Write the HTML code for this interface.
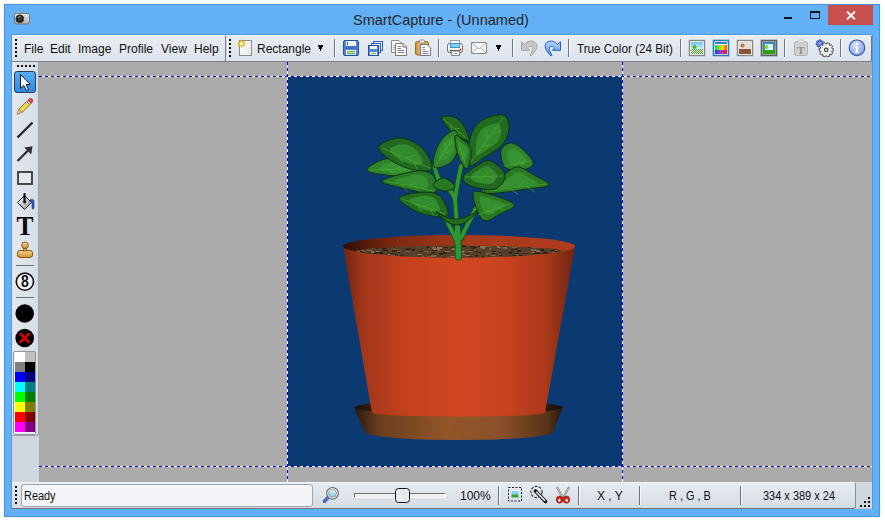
<!DOCTYPE html>
<html><head><meta charset="utf-8">
<style>
*{margin:0;padding:0;box-sizing:border-box}
html,body{width:885px;height:521px;overflow:hidden;background:#fff;font-family:"Liberation Sans",sans-serif}
.a{position:absolute}
#shadow{display:none}
#win{left:4px;top:4px;width:876px;height:513px;background:#62b0f6;border:1px solid #4b93d9;box-shadow:0 0 3px rgba(60,40,20,0.13)}
.title{left:353px;top:11px;font-size:15px;color:#262626;white-space:nowrap;transform:scaleX(0.968);transform-origin:0 0}
.tb{background:linear-gradient(#e9edf3,#dde3eb);border-bottom:1px solid #a9b2bd}
.menu{font-size:12px;color:#111;white-space:nowrap;top:42px}
.grip{width:2px;height:2px;background:#111}
.sep{width:1px;background:#6e757e;box-shadow:1px 0 0 #f6f8fb}
.txt{font-size:12px;color:#111;white-space:nowrap}
</style></head><body>
<div class="a" id="shadow"></div>
<div class="a" id="win"></div>
<!-- title bar icon -->
<svg class="a" style="left:13px;top:11px" width="18" height="15" viewBox="0 0 18 15">
 <defs><linearGradient id="camg" x1="0" y1="0" x2="0" y2="1"><stop offset="0" stop-color="#f4f4f4"/><stop offset="1" stop-color="#a8a8a8"/></linearGradient></defs>
 <rect x="3.5" y="0.8" width="3.5" height="2" rx="0.8" fill="#c8b8a0"/>
 <rect x="1.5" y="2.5" width="15" height="10.5" rx="1.8" fill="url(#camg)" stroke="#6a6a6a" stroke-width="0.9"/>
 <circle cx="6.8" cy="7.8" r="4" fill="#1a1a1a" stroke="#444" stroke-width="0.6"/>
 <circle cx="6.8" cy="7.8" r="2.2" fill="#3a3a3a"/>
 <path d="M5 6.8 A2 2 0 0 1 7.5 5.6" stroke="#bbb" stroke-width="0.8" fill="none"/>
 <rect x="12" y="4" width="3" height="2" fill="#fff" stroke="#999" stroke-width="0.4"/>
</svg>
<div class="a title">SmartCapture - (Unnamed)</div>
<!-- caption buttons -->
<div class="a" style="left:784px;top:17px;width:8px;height:2px;background:#111"></div>
<div class="a" style="left:810px;top:11px;width:10px;height:8px;border:1px solid #111;border-top-width:2px"></div>
<div class="a" style="left:828px;top:5px;width:45px;height:20px;background:#c7504f"></div>
<svg class="a" style="left:846px;top:11px" width="10" height="9" viewBox="0 0 10 9"><path d="M1 0.5 L9 8.5 M9 0.5 L1 8.5" stroke="#fff" stroke-width="1.8"/></svg>

<!-- client area -->
<div class="a" style="left:11px;top:34px;width:862px;height:475px;background:#4f9ae0"></div><div class="a" style="left:12px;top:35px;width:860px;height:474px;background:#cfd6e0"></div>

<!-- toolbars -->
<div class="a tb" style="left:12px;top:35px;width:214px;height:27px;border-right:1px solid #7d848c;border-radius:0 3px 3px 0;border-top:1px solid #f1f4f8"></div>
<div class="a tb" style="left:227px;top:35px;width:645px;height:27px;border-right:1px solid #6c737b;border-left:1px solid #f1f4f8;border-radius:2px 3px 3px 2px;border-top:1px solid #f1f4f8"></div>
<div class="a" style="left:12px;top:61px;width:860px;height:1px;background:#7b8189"></div>
<div class="a grip" style="left:15px;top:39px"></div><div class="a grip" style="left:15px;top:43px"></div><div class="a grip" style="left:15px;top:47px"></div><div class="a grip" style="left:15px;top:51px"></div><div class="a grip" style="left:15px;top:55px"></div><div class="a grip" style="left:229px;top:39px"></div><div class="a grip" style="left:229px;top:43px"></div><div class="a grip" style="left:229px;top:47px"></div><div class="a grip" style="left:229px;top:51px"></div><div class="a grip" style="left:229px;top:55px"></div>
<div class="a menu" style="left:24px">File</div>
<div class="a menu" style="left:50px">Edit</div>
<div class="a menu" style="left:78px">Image</div>
<div class="a menu" style="left:119px">Profile</div>
<div class="a menu" style="left:161px">View</div>
<div class="a menu" style="left:194px">Help</div>
<div class="a txt" style="left:257px;top:42px">Rectangle</div>
<div class="a txt" style="left:577px;top:42px;transform:scaleX(0.975);transform-origin:0 0">True Color (24 Bit)</div>
<div class="a sep" style="left:334px;top:39px;height:18px"></div><div class="a sep" style="left:438px;top:39px;height:18px"></div><div class="a sep" style="left:512px;top:39px;height:18px"></div><div class="a sep" style="left:568px;top:39px;height:18px"></div><div class="a sep" style="left:680px;top:39px;height:18px"></div><div class="a sep" style="left:784px;top:39px;height:18px"></div><div class="a sep" style="left:840px;top:39px;height:18px"></div>

<!-- canvas -->
<div class="a" style="left:39px;top:62px;width:833px;height:420px;background:#ababab"></div>
<svg class="a" style="left:39px;top:62px" width="833" height="420">
 <line x1="0" y1="14.5" x2="833" y2="14.5" stroke="#fff"/>
 <line x1="0" y1="14.5" x2="833" y2="14.5" stroke="#0000ff" stroke-dasharray="3 3"/>
 <line x1="0" y1="404.5" x2="833" y2="404.5" stroke="#fff"/>
 <line x1="0" y1="404.5" x2="833" y2="404.5" stroke="#0000ff" stroke-dasharray="3 3"/>
 <line x1="248.5" y1="0" x2="248.5" y2="420" stroke="#fff"/>
 <line x1="248.5" y1="0" x2="248.5" y2="420" stroke="#0000ff" stroke-dasharray="3 3"/>
 <line x1="583.5" y1="0" x2="583.5" y2="420" stroke="#fff"/>
 <line x1="583.5" y1="0" x2="583.5" y2="420" stroke="#0000ff" stroke-dasharray="3 3"/>
</svg>
<div class="a" id="img" style="left:288px;top:77px;width:334px;height:389px;background:#0b3a73"></div>
<!--PLANT--><svg class="a" style="left:288px;top:77px" width="334" height="389" viewBox="288 77 334 389">
<defs>
<linearGradient id="potg" x1="343" y1="0" x2="575" y2="0" gradientUnits="userSpaceOnUse">
 <stop offset="0" stop-color="#6a2410"/><stop offset="0.08" stop-color="#a0361a"/><stop offset="0.26" stop-color="#c3401e"/><stop offset="0.5" stop-color="#d24621"/><stop offset="0.7" stop-color="#c84220"/><stop offset="0.88" stop-color="#a8391a"/><stop offset="1" stop-color="#6e2410"/>
</linearGradient>
<linearGradient id="innerg" x1="343" y1="0" x2="575" y2="0" gradientUnits="userSpaceOnUse">
 <stop offset="0" stop-color="#2e0c04"/><stop offset="0.2" stop-color="#7a2810"/><stop offset="0.55" stop-color="#a83a1c"/><stop offset="1" stop-color="#b03c1c"/>
</linearGradient>
<linearGradient id="saug" x1="354" y1="0" x2="563" y2="0" gradientUnits="userSpaceOnUse">
 <stop offset="0" stop-color="#2a170a"/><stop offset="0.12" stop-color="#6a3e1e"/><stop offset="0.45" stop-color="#925628"/><stop offset="0.7" stop-color="#8a5028"/><stop offset="0.92" stop-color="#5a3418"/><stop offset="1" stop-color="#2a180c"/>
</linearGradient>
<linearGradient id="sauin" x1="354" y1="0" x2="563" y2="0" gradientUnits="userSpaceOnUse">
 <stop offset="0" stop-color="#1a0e06"/><stop offset="0.2" stop-color="#4a2c14"/><stop offset="0.8" stop-color="#4a2c14"/><stop offset="1" stop-color="#1a0e06"/>
</linearGradient>
<clipPath id="rimclip"><ellipse cx="459" cy="246.3" rx="116" ry="11.3"/></clipPath>
<clipPath id="soilclip"><ellipse cx="460" cy="251.8" rx="104" ry="6.2"/></clipPath>
</defs>
<ellipse cx="458.5" cy="407.5" rx="104.5" ry="7" fill="url(#sauin)"/>
<path d="M354,407.5 A104.5,7 0 0 0 563,407.5 L553,432 A94,8 0 0 1 365,432 Z" fill="url(#saug)"/>
<path d="M343,246.3 L372,413 A87,4 0 0 0 545,413 L575,246.3 Z" fill="url(#potg)"/>
<ellipse cx="459" cy="246.3" rx="116" ry="11.3" fill="url(#innerg)"/>
<g clip-path="url(#rimclip)"><g clip-path="url(#soilclip)"><rect x="350" y="244" width="220" height="16" fill="#54402a"/><rect x="403" y="252" width="4" height="2" fill="#5a442a"/><rect x="487" y="245" width="2" height="1" fill="#32240f"/><rect x="471" y="247" width="5" height="2" fill="#3a2a16"/><rect x="471" y="250" width="3" height="1" fill="#2e2012"/><rect x="385" y="258" width="5" height="2" fill="#6e5636"/><rect x="497" y="245" width="2" height="1" fill="#3a2a16"/><rect x="359" y="257" width="5" height="2" fill="#2e2012"/><rect x="551" y="250" width="5" height="1" fill="#2e2012"/><rect x="525" y="251" width="3" height="1" fill="#6e5636"/><rect x="360" y="251" width="4" height="2" fill="#5a442a"/><rect x="520" y="257" width="5" height="2" fill="#3a2a16"/><rect x="435" y="249" width="5" height="2" fill="#806646"/><rect x="547" y="254" width="2" height="1" fill="#8a7252"/><rect x="497" y="246" width="4" height="2" fill="#8a7252"/><rect x="475" y="255" width="3" height="2" fill="#3a2a16"/><rect x="565" y="248" width="2" height="1" fill="#5a442a"/><rect x="536" y="259" width="2" height="1" fill="#3a2a16"/><rect x="366" y="257" width="2" height="1" fill="#5a442a"/><rect x="518" y="257" width="2" height="2" fill="#8a7252"/><rect x="517" y="250" width="4" height="2" fill="#32240f"/><rect x="461" y="259" width="4" height="1" fill="#6e5636"/><rect x="375" y="252" width="3" height="1" fill="#32240f"/><rect x="484" y="246" width="2" height="1" fill="#32240f"/><rect x="430" y="246" width="5" height="1" fill="#5a442a"/><rect x="540" y="250" width="2" height="2" fill="#3a2a16"/><rect x="462" y="250" width="3" height="1" fill="#5a442a"/><rect x="563" y="252" width="4" height="1" fill="#3a2a16"/><rect x="442" y="253" width="2" height="1" fill="#8a7252"/><rect x="479" y="246" width="4" height="1" fill="#32240f"/><rect x="499" y="249" width="4" height="2" fill="#5a442a"/><rect x="357" y="245" width="2" height="1" fill="#32240f"/><rect x="488" y="248" width="4" height="1" fill="#32240f"/><rect x="392" y="255" width="4" height="1" fill="#3a2a16"/><rect x="433" y="256" width="2" height="2" fill="#2e2012"/><rect x="511" y="249" width="3" height="2" fill="#3a2a16"/><rect x="410" y="249" width="5" height="2" fill="#2e2012"/><rect x="373" y="253" width="4" height="2" fill="#3a2a16"/><rect x="400" y="256" width="3" height="1" fill="#32240f"/><rect x="512" y="247" width="5" height="1" fill="#806646"/><rect x="522" y="245" width="3" height="1" fill="#3a2a16"/><rect x="533" y="253" width="4" height="1" fill="#3a2a16"/><rect x="531" y="245" width="4" height="2" fill="#806646"/><rect x="443" y="252" width="4" height="1" fill="#32240f"/><rect x="489" y="248" width="5" height="1" fill="#5a442a"/><rect x="386" y="244" width="5" height="2" fill="#2e2012"/><rect x="400" y="255" width="4" height="2" fill="#32240f"/><rect x="544" y="257" width="4" height="1" fill="#3a2a16"/><rect x="405" y="245" width="3" height="1" fill="#8a7252"/><rect x="363" y="251" width="2" height="1" fill="#8a7252"/><rect x="417" y="254" width="5" height="1" fill="#8a7252"/><rect x="377" y="246" width="5" height="1" fill="#32240f"/><rect x="400" y="246" width="2" height="1" fill="#806646"/><rect x="523" y="258" width="3" height="1" fill="#5a442a"/><rect x="488" y="257" width="2" height="1" fill="#806646"/><rect x="410" y="252" width="5" height="1" fill="#5a442a"/><rect x="422" y="256" width="2" height="1" fill="#6e5636"/><rect x="379" y="245" width="2" height="2" fill="#6e5636"/><rect x="463" y="251" width="3" height="1" fill="#6e5636"/><rect x="428" y="254" width="4" height="1" fill="#32240f"/><rect x="393" y="249" width="2" height="1" fill="#8a7252"/><rect x="353" y="255" width="2" height="2" fill="#806646"/><rect x="361" y="251" width="5" height="2" fill="#3a2a16"/><rect x="361" y="257" width="2" height="1" fill="#2e2012"/><rect x="459" y="255" width="5" height="2" fill="#5a442a"/><rect x="452" y="248" width="4" height="2" fill="#8a7252"/><rect x="367" y="250" width="5" height="1" fill="#6e5636"/><rect x="554" y="250" width="4" height="1" fill="#5a442a"/><rect x="501" y="258" width="5" height="2" fill="#6e5636"/><rect x="510" y="252" width="2" height="2" fill="#2e2012"/><rect x="353" y="246" width="5" height="1" fill="#8a7252"/><rect x="372" y="245" width="5" height="1" fill="#3a2a16"/><rect x="357" y="257" width="2" height="1" fill="#3a2a16"/><rect x="377" y="251" width="4" height="2" fill="#32240f"/><rect x="525" y="245" width="3" height="1" fill="#8a7252"/><rect x="514" y="258" width="2" height="2" fill="#32240f"/><rect x="540" y="247" width="2" height="1" fill="#806646"/><rect x="492" y="251" width="5" height="1" fill="#32240f"/><rect x="481" y="258" width="5" height="1" fill="#5a442a"/><rect x="460" y="259" width="5" height="2" fill="#806646"/><rect x="442" y="253" width="5" height="1" fill="#2e2012"/><rect x="439" y="257" width="3" height="1" fill="#5a442a"/><rect x="514" y="258" width="5" height="2" fill="#2e2012"/><rect x="537" y="246" width="3" height="1" fill="#8a7252"/><rect x="463" y="258" width="4" height="2" fill="#2e2012"/><rect x="537" y="253" width="4" height="1" fill="#32240f"/><rect x="357" y="251" width="5" height="1" fill="#806646"/><rect x="475" y="248" width="5" height="1" fill="#5a442a"/><rect x="566" y="251" width="3" height="1" fill="#8a7252"/><rect x="532" y="256" width="2" height="1" fill="#2e2012"/><rect x="368" y="258" width="2" height="1" fill="#806646"/><rect x="544" y="254" width="2" height="1" fill="#3a2a16"/><rect x="407" y="257" width="4" height="1" fill="#806646"/><rect x="486" y="254" width="2" height="1" fill="#806646"/><rect x="539" y="249" width="5" height="1" fill="#2e2012"/><rect x="525" y="246" width="4" height="1" fill="#6e5636"/><rect x="429" y="253" width="4" height="1" fill="#6e5636"/><rect x="424" y="251" width="5" height="1" fill="#806646"/><rect x="491" y="255" width="5" height="1" fill="#806646"/><rect x="470" y="246" width="4" height="1" fill="#2e2012"/><rect x="445" y="251" width="4" height="1" fill="#8a7252"/><rect x="555" y="250" width="4" height="1" fill="#32240f"/><rect x="495" y="254" width="4" height="1" fill="#3a2a16"/><rect x="556" y="249" width="2" height="2" fill="#5a442a"/><rect x="462" y="245" width="4" height="2" fill="#2e2012"/><rect x="474" y="247" width="3" height="1" fill="#32240f"/><rect x="544" y="254" width="2" height="1" fill="#8a7252"/><rect x="383" y="249" width="5" height="2" fill="#32240f"/><rect x="492" y="251" width="4" height="1" fill="#2e2012"/><rect x="367" y="255" width="5" height="1" fill="#6e5636"/><rect x="409" y="250" width="3" height="1" fill="#5a442a"/><rect x="461" y="248" width="4" height="1" fill="#5a442a"/><rect x="449" y="256" width="2" height="1" fill="#5a442a"/><rect x="535" y="246" width="4" height="2" fill="#6e5636"/><rect x="499" y="252" width="2" height="1" fill="#2e2012"/><rect x="393" y="250" width="5" height="2" fill="#806646"/><rect x="480" y="246" width="5" height="1" fill="#8a7252"/><rect x="466" y="253" width="3" height="1" fill="#32240f"/><rect x="521" y="244" width="5" height="1" fill="#3a2a16"/><rect x="435" y="252" width="4" height="2" fill="#5a442a"/><rect x="563" y="254" width="4" height="2" fill="#5a442a"/><rect x="359" y="247" width="2" height="1" fill="#3a2a16"/><rect x="515" y="248" width="3" height="2" fill="#2e2012"/><rect x="451" y="247" width="3" height="1" fill="#3a2a16"/><rect x="460" y="254" width="5" height="1" fill="#8a7252"/><rect x="413" y="254" width="3" height="1" fill="#5a442a"/><rect x="523" y="253" width="2" height="1" fill="#32240f"/><rect x="486" y="252" width="5" height="2" fill="#6e5636"/><rect x="553" y="249" width="4" height="2" fill="#2e2012"/><rect x="381" y="257" width="2" height="2" fill="#6e5636"/><rect x="512" y="249" width="3" height="1" fill="#3a2a16"/><rect x="395" y="254" width="3" height="1" fill="#32240f"/><rect x="376" y="245" width="2" height="1" fill="#2e2012"/><rect x="387" y="251" width="2" height="2" fill="#3a2a16"/><rect x="443" y="254" width="4" height="1" fill="#5a442a"/><rect x="451" y="254" width="5" height="1" fill="#5a442a"/><rect x="546" y="255" width="4" height="1" fill="#5a442a"/><rect x="466" y="253" width="3" height="1" fill="#3a2a16"/><rect x="397" y="256" width="3" height="1" fill="#8a7252"/><rect x="394" y="247" width="3" height="2" fill="#5a442a"/><rect x="461" y="254" width="3" height="1" fill="#8a7252"/><rect x="388" y="251" width="2" height="1" fill="#5a442a"/><rect x="449" y="250" width="2" height="1" fill="#5a442a"/><rect x="360" y="251" width="3" height="1" fill="#6e5636"/><rect x="436" y="247" width="4" height="2" fill="#6e5636"/><rect x="427" y="246" width="2" height="2" fill="#32240f"/><rect x="411" y="256" width="5" height="1" fill="#5a442a"/><rect x="406" y="248" width="4" height="2" fill="#32240f"/><rect x="420" y="245" width="5" height="1" fill="#8a7252"/><rect x="485" y="246" width="2" height="1" fill="#806646"/><rect x="461" y="251" width="3" height="2" fill="#8a7252"/><rect x="546" y="247" width="5" height="1" fill="#3a2a16"/><rect x="455" y="249" width="2" height="1" fill="#32240f"/><rect x="514" y="253" width="5" height="1" fill="#32240f"/><rect x="392" y="250" width="5" height="2" fill="#32240f"/><rect x="468" y="256" width="5" height="1" fill="#3a2a16"/><rect x="512" y="255" width="4" height="1" fill="#32240f"/><rect x="525" y="251" width="5" height="2" fill="#5a442a"/><rect x="427" y="256" width="5" height="1" fill="#6e5636"/><rect x="385" y="255" width="2" height="1" fill="#6e5636"/><rect x="516" y="254" width="2" height="1" fill="#806646"/><rect x="482" y="256" width="2" height="2" fill="#3a2a16"/><rect x="362" y="251" width="4" height="1" fill="#6e5636"/><rect x="368" y="250" width="2" height="1" fill="#8a7252"/><rect x="419" y="251" width="3" height="1" fill="#2e2012"/><rect x="363" y="246" width="3" height="2" fill="#6e5636"/><rect x="376" y="248" width="3" height="1" fill="#3a2a16"/><rect x="473" y="250" width="4" height="2" fill="#3a2a16"/><rect x="393" y="247" width="2" height="1" fill="#3a2a16"/><rect x="526" y="253" width="2" height="1" fill="#32240f"/><rect x="371" y="251" width="3" height="2" fill="#8a7252"/><rect x="376" y="251" width="4" height="1" fill="#8a7252"/><rect x="495" y="256" width="4" height="2" fill="#5a442a"/><rect x="528" y="247" width="2" height="1" fill="#32240f"/><rect x="509" y="245" width="4" height="1" fill="#5a442a"/><rect x="515" y="258" width="4" height="1" fill="#3a2a16"/><rect x="492" y="253" width="3" height="1" fill="#32240f"/><rect x="533" y="245" width="3" height="1" fill="#5a442a"/><rect x="370" y="247" width="3" height="2" fill="#806646"/><rect x="509" y="257" width="5" height="2" fill="#8a7252"/><rect x="536" y="250" width="3" height="2" fill="#5a442a"/><rect x="457" y="256" width="5" height="1" fill="#8a7252"/><rect x="551" y="248" width="2" height="1" fill="#6e5636"/><rect x="358" y="246" width="2" height="2" fill="#5a442a"/><rect x="361" y="255" width="4" height="1" fill="#5a442a"/><rect x="360" y="251" width="3" height="2" fill="#3a2a16"/><rect x="414" y="246" width="4" height="1" fill="#5a442a"/><rect x="369" y="246" width="4" height="1" fill="#3a2a16"/><rect x="541" y="250" width="3" height="1" fill="#32240f"/><rect x="555" y="251" width="3" height="1" fill="#3a2a16"/><rect x="414" y="244" width="4" height="1" fill="#3a2a16"/><rect x="531" y="255" width="2" height="1" fill="#806646"/><rect x="488" y="246" width="2" height="1" fill="#6e5636"/><rect x="352" y="259" width="5" height="1" fill="#3a2a16"/><rect x="430" y="252" width="5" height="1" fill="#806646"/><rect x="355" y="250" width="4" height="1" fill="#8a7252"/><rect x="470" y="245" width="4" height="1" fill="#806646"/><rect x="497" y="251" width="4" height="1" fill="#6e5636"/><rect x="358" y="245" width="3" height="2" fill="#806646"/><rect x="558" y="255" width="5" height="2" fill="#3a2a16"/><rect x="531" y="252" width="4" height="1" fill="#806646"/><rect x="362" y="251" width="2" height="1" fill="#5a442a"/><rect x="465" y="255" width="5" height="1" fill="#8a7252"/><rect x="489" y="248" width="2" height="2" fill="#806646"/><rect x="566" y="252" width="5" height="1" fill="#5a442a"/><rect x="450" y="256" width="5" height="1" fill="#8a7252"/><rect x="386" y="249" width="2" height="1" fill="#5a442a"/><rect x="536" y="256" width="4" height="1" fill="#32240f"/><rect x="476" y="252" width="5" height="1" fill="#32240f"/><rect x="522" y="255" width="4" height="1" fill="#5a442a"/><rect x="496" y="250" width="5" height="2" fill="#5a442a"/><rect x="394" y="258" width="3" height="2" fill="#5a442a"/><rect x="555" y="250" width="2" height="1" fill="#806646"/><rect x="557" y="258" width="4" height="2" fill="#5a442a"/><rect x="472" y="245" width="5" height="1" fill="#5a442a"/><rect x="564" y="245" width="3" height="1" fill="#2e2012"/><rect x="369" y="252" width="2" height="2" fill="#3a2a16"/><rect x="529" y="244" width="4" height="2" fill="#6e5636"/><rect x="445" y="259" width="5" height="1" fill="#32240f"/><rect x="470" y="245" width="3" height="1" fill="#806646"/><rect x="383" y="258" width="3" height="2" fill="#5a442a"/><rect x="498" y="254" width="3" height="1" fill="#6e5636"/><rect x="391" y="253" width="4" height="1" fill="#2e2012"/><rect x="530" y="257" width="2" height="2" fill="#806646"/><rect x="467" y="250" width="2" height="1" fill="#5a442a"/><rect x="391" y="244" width="2" height="1" fill="#6e5636"/><rect x="383" y="246" width="4" height="2" fill="#6e5636"/><rect x="554" y="244" width="4" height="1" fill="#5a442a"/><rect x="405" y="249" width="5" height="1" fill="#2e2012"/><rect x="535" y="251" width="4" height="2" fill="#2e2012"/><rect x="536" y="251" width="5" height="1" fill="#8a7252"/><rect x="468" y="251" width="5" height="1" fill="#806646"/><rect x="515" y="248" width="3" height="1" fill="#3a2a16"/><rect x="533" y="247" width="4" height="1" fill="#806646"/><rect x="363" y="259" width="5" height="2" fill="#3a2a16"/><rect x="390" y="253" width="3" height="1" fill="#3a2a16"/><rect x="439" y="253" width="4" height="2" fill="#2e2012"/><rect x="517" y="245" width="5" height="1" fill="#806646"/><rect x="480" y="247" width="5" height="2" fill="#8a7252"/><rect x="433" y="249" width="4" height="2" fill="#8a7252"/><rect x="519" y="255" width="4" height="2" fill="#3a2a16"/><rect x="426" y="259" width="4" height="1" fill="#806646"/><rect x="379" y="252" width="4" height="2" fill="#2e2012"/><rect x="406" y="251" width="4" height="1" fill="#806646"/><rect x="455" y="252" width="3" height="2" fill="#8a7252"/><rect x="465" y="259" width="2" height="1" fill="#5a442a"/><rect x="444" y="257" width="4" height="1" fill="#806646"/><rect x="537" y="250" width="2" height="1" fill="#8a7252"/><rect x="398" y="252" width="2" height="1" fill="#2e2012"/><rect x="539" y="255" width="4" height="1" fill="#32240f"/><rect x="432" y="250" width="5" height="1" fill="#2e2012"/><rect x="500" y="246" width="5" height="1" fill="#32240f"/><rect x="400" y="250" width="2" height="1" fill="#6e5636"/><rect x="397" y="251" width="3" height="1" fill="#6e5636"/><rect x="468" y="258" width="5" height="2" fill="#32240f"/><rect x="531" y="257" width="3" height="1" fill="#32240f"/><rect x="499" y="246" width="5" height="1" fill="#5a442a"/><rect x="382" y="249" width="3" height="1" fill="#3a2a16"/><rect x="390" y="257" width="5" height="1" fill="#3a2a16"/><rect x="428" y="244" width="3" height="1" fill="#32240f"/><rect x="382" y="247" width="5" height="2" fill="#2e2012"/><rect x="557" y="248" width="4" height="1" fill="#2e2012"/><rect x="563" y="254" width="2" height="1" fill="#5a442a"/><rect x="541" y="255" width="4" height="1" fill="#3a2a16"/><rect x="354" y="251" width="5" height="2" fill="#6e5636"/><rect x="531" y="249" width="5" height="2" fill="#806646"/><rect x="543" y="247" width="5" height="1" fill="#6e5636"/><rect x="491" y="244" width="3" height="2" fill="#3a2a16"/><rect x="370" y="247" width="5" height="2" fill="#5a442a"/><rect x="413" y="259" width="3" height="1" fill="#8a7252"/><rect x="416" y="257" width="3" height="2" fill="#8a7252"/><rect x="431" y="252" width="4" height="2" fill="#3a2a16"/><rect x="508" y="252" width="5" height="1" fill="#2e2012"/><rect x="445" y="249" width="3" height="1" fill="#3a2a16"/><rect x="536" y="247" width="2" height="1" fill="#6e5636"/><rect x="552" y="252" width="3" height="1" fill="#806646"/><rect x="515" y="249" width="3" height="1" fill="#3a2a16"/><rect x="499" y="255" width="3" height="1" fill="#32240f"/><rect x="436" y="247" width="4" height="1" fill="#32240f"/><rect x="363" y="258" width="2" height="1" fill="#806646"/><rect x="418" y="247" width="3" height="1" fill="#5a442a"/><rect x="503" y="247" width="4" height="2" fill="#806646"/><rect x="390" y="255" width="5" height="2" fill="#8a7252"/><rect x="444" y="247" width="4" height="1" fill="#32240f"/><rect x="364" y="256" width="5" height="1" fill="#6e5636"/><rect x="477" y="248" width="5" height="2" fill="#5a442a"/><rect x="400" y="256" width="5" height="1" fill="#5a442a"/><rect x="567" y="251" width="3" height="1" fill="#2e2012"/><rect x="443" y="257" width="3" height="2" fill="#32240f"/><rect x="375" y="252" width="4" height="1" fill="#2e2012"/><rect x="468" y="257" width="5" height="1" fill="#5a442a"/><rect x="361" y="249" width="3" height="2" fill="#6e5636"/><rect x="504" y="259" width="4" height="2" fill="#2e2012"/><rect x="543" y="252" width="5" height="2" fill="#2e2012"/><rect x="415" y="244" width="4" height="1" fill="#5a442a"/><rect x="432" y="247" width="4" height="2" fill="#806646"/><rect x="474" y="250" width="2" height="1" fill="#8a7252"/><rect x="387" y="258" width="5" height="1" fill="#8a7252"/><rect x="437" y="247" width="5" height="2" fill="#8a7252"/><rect x="431" y="255" width="5" height="2" fill="#806646"/><rect x="388" y="254" width="2" height="1" fill="#8a7252"/></g></g>
<path d="M458.5,257 L457.5,228" fill="none" stroke="#15501a" stroke-width="7.2" stroke-linecap="round"/>
<path d="M458.5,256 L457,225" fill="none" stroke="#15501a" stroke-width="5.6" stroke-linecap="round"/>
<path d="M457,241 Q450,228 444,214" fill="none" stroke="#15501a" stroke-width="5.6" stroke-linecap="round"/>
<path d="M457,225 L455,199 Q452,190 438,178" fill="none" stroke="#15501a" stroke-width="5.6" stroke-linecap="round"/>
<path d="M455,199 Q457,185 461,166" fill="none" stroke="#15501a" stroke-width="5.6" stroke-linecap="round"/>
<path d="M461,238 Q472,215 486,190" fill="none" stroke="#15501a" stroke-width="5.6" stroke-linecap="round"/>
<path d="M438,178 Q436,172 434,166" fill="none" stroke="#15501a" stroke-width="5.6" stroke-linecap="round"/>
<path d="M458.5,257 L457.5,228" fill="none" stroke="#2e9634" stroke-width="5.4" stroke-linecap="round"/>
<path d="M458.5,256 L457,225" fill="none" stroke="#2e9634" stroke-width="3.8" stroke-linecap="round"/>
<path d="M457,241 Q450,228 444,214" fill="none" stroke="#2e9634" stroke-width="3.8" stroke-linecap="round"/>
<path d="M457,225 L455,199 Q452,190 438,178" fill="none" stroke="#2e9634" stroke-width="3.8" stroke-linecap="round"/>
<path d="M455,199 Q457,185 461,166" fill="none" stroke="#2e9634" stroke-width="3.8" stroke-linecap="round"/>
<path d="M461,238 Q472,215 486,190" fill="none" stroke="#2e9634" stroke-width="3.8" stroke-linecap="round"/>
<path d="M438,178 Q436,172 434,166" fill="none" stroke="#2e9634" stroke-width="3.8" stroke-linecap="round"/>
<path d="M441,117 Q462.5,110.5 470,142 Q448.5,134.5 441,117Z" fill="#216a1f" stroke="#0d330e" stroke-width="0.95"/>
<path d="M443,119 L466,138 M451.1,125.7 L451.9,130.9 M454.5,128.5 L459.8,128.4 M457.9,131.3 L458.8,136.6" stroke="#4fae34" stroke-width="0.9" opacity="0.7" fill="none"/>
<path d="M434.0,167.0 C431.7,164.8 434.2,155.2 436.0,150.0 C437.8,144.8 441.7,139.2 445.0,136.0 C448.3,132.8 453.7,129.2 456.0,131.0 C458.3,132.8 460.0,141.7 459.0,147.0 C458.0,152.3 454.2,159.7 450.0,163.0 C445.8,166.3 436.3,169.2 434.0,167.0Z" fill="#2e822b" stroke="#0d330e" stroke-width="0.95"/>
<path d="M438.8,160.2 C437.4,158.8 438.9,152.8 440.1,149.6 C441.2,146.4 443.6,142.9 445.6,140.9 C447.7,139.0 451.0,136.7 452.5,137.8 C453.9,139.0 454.9,144.5 454.3,147.8 C453.7,151.1 451.3,155.6 448.7,157.7 C446.2,159.7 440.3,161.5 438.8,160.2Z" fill="#3c9c35" opacity="0.65"/>
<path d="M437,164 L455,134 M443.3,153.5 L449.2,151.6 M446.0,149.0 L444.9,142.8 M448.7,144.5 L454.6,142.6" stroke="#4fae34" stroke-width="0.9" opacity="0.7" fill="none"/>
<path d="M501.0,151.0 C501.7,146.8 506.7,143.5 510.0,143.0 C513.3,142.5 517.2,144.8 521.0,148.0 C524.8,151.2 532.2,158.5 533.0,162.0 C533.8,165.5 530.5,168.0 526.0,169.0 C521.5,170.0 510.2,171.0 506.0,168.0 C501.8,165.0 500.3,155.2 501.0,151.0Z" fill="#2e822b" stroke="#0d330e" stroke-width="0.95"/>
<path d="M506.8,153.2 C507.2,150.6 510.3,148.6 512.3,148.3 C514.4,147.9 516.8,149.4 519.2,151.4 C521.5,153.3 526.1,157.9 526.6,160.0 C527.1,162.2 525.1,163.8 522.3,164.4 C519.5,165.0 512.4,165.6 509.9,163.8 C507.3,161.9 506.3,155.8 506.8,153.2Z" fill="#3c9c35" opacity="0.65"/>
<path d="M504,166 L530,161 M513.1,164.2 L517.2,166.6 M517.0,163.5 L519.9,159.8 M520.9,162.8 L525.0,165.1" stroke="#4fae34" stroke-width="0.9" opacity="0.7" fill="none"/>
<path d="M485.0,193.0 C480.8,190.8 497.7,180.3 503.0,176.0 C508.3,171.7 511.8,167.2 517.0,167.0 C522.2,166.8 528.7,172.0 534.0,175.0 C539.3,178.0 550.0,182.7 549.0,185.0 C548.0,187.3 538.7,187.7 528.0,189.0 C517.3,190.3 489.2,195.2 485.0,193.0Z" fill="#287826" stroke="#0d330e" stroke-width="0.95"/>
<path d="M498.0,188.4 C495.5,187.0 505.9,180.5 509.2,177.8 C512.5,175.2 514.7,172.4 517.9,172.3 C521.1,172.2 525.1,175.4 528.4,177.2 C531.7,179.1 538.3,182.0 537.7,183.4 C537.1,184.9 531.3,185.1 524.7,185.9 C518.1,186.7 500.6,189.7 498.0,188.4Z" fill="#3c9c35" opacity="0.65"/>
<path d="M490,191 L546,184 M509.6,188.6 L518.0,194.2 M518.0,187.5 L524.7,180.0 M526.4,186.4 L534.8,192.1" stroke="#4fae34" stroke-width="0.9" opacity="0.7" fill="none"/>
<path d="M367.0,170.0 C366.8,167.3 377.8,160.5 385.0,159.0 C392.2,157.5 403.3,159.5 410.0,161.0 C416.7,162.5 425.0,165.5 425.0,168.0 C425.0,170.5 416.5,174.8 410.0,176.0 C403.5,177.2 393.2,176.0 386.0,175.0 C378.8,174.0 367.2,172.7 367.0,170.0Z" fill="#2e822b" stroke="#0d330e" stroke-width="0.95"/>
<path d="M378.5,169.3 C378.4,167.7 385.2,163.4 389.6,162.5 C394.1,161.6 401.0,162.8 405.1,163.7 C409.3,164.7 414.4,166.5 414.4,168.1 C414.4,169.6 409.2,172.3 405.1,173.0 C401.1,173.7 394.7,173.0 390.2,172.4 C385.8,171.8 378.6,171.0 378.5,169.3Z" fill="#3c9c35" opacity="0.65"/>
<path d="M370,170 L422,169 M388.2,169.7 L395.3,175.6 M396.0,169.5 L402.9,163.3 M403.8,169.3 L410.9,175.3" stroke="#4fae34" stroke-width="0.9" opacity="0.7" fill="none"/>
<path d="M379.0,146.0 C380.7,142.5 392.7,138.3 399.0,138.0 C405.3,137.7 412.2,141.0 417.0,144.0 C421.8,147.0 425.7,151.7 428.0,156.0 C430.3,160.3 434.0,167.8 431.0,170.0 C428.0,172.2 417.0,170.8 410.0,169.0 C403.0,167.2 394.2,162.8 389.0,159.0 C383.8,155.2 377.3,149.5 379.0,146.0Z" fill="#216a1f" stroke="#0d330e" stroke-width="0.95"/>
<path d="M389.9,149.3 C390.9,147.1 398.3,144.5 402.3,144.3 C406.2,144.1 410.4,146.2 413.4,148.0 C416.4,149.9 418.8,152.8 420.2,155.5 C421.7,158.1 424.0,162.8 422.1,164.1 C420.2,165.5 413.4,164.7 409.1,163.5 C404.7,162.4 399.3,159.7 396.1,157.3 C392.9,154.9 388.8,151.4 389.9,149.3Z" fill="#3c9c35" opacity="0.65"/>
<path d="M382,148 L430,168 M398.8,155.0 L402.9,163.3 M406.0,158.0 L414.8,155.1 M413.2,161.0 L417.3,169.3" stroke="#4fae34" stroke-width="0.9" opacity="0.7" fill="none"/>
<path d="M469.0,165.0 C466.5,161.8 468.0,145.3 470.0,138.0 C472.0,130.7 475.5,124.8 481.0,121.0 C486.5,117.2 498.3,114.0 503.0,115.0 C507.7,116.0 509.0,122.2 509.0,127.0 C509.0,131.8 507.0,139.0 503.0,144.0 C499.0,149.0 490.7,153.5 485.0,157.0 C479.3,160.5 471.5,168.2 469.0,165.0Z" fill="#216a1f" stroke="#0d330e" stroke-width="0.95"/>
<path d="M476.4,154.8 C474.9,152.8 475.8,142.6 477.1,138.1 C478.3,133.5 480.5,129.9 483.9,127.5 C487.3,125.1 494.6,123.2 497.5,123.8 C500.4,124.4 501.2,128.2 501.2,131.2 C501.2,134.2 500.0,138.7 497.5,141.8 C495.0,144.9 489.9,147.7 486.4,149.8 C482.8,152.0 478.0,156.8 476.4,154.8Z" fill="#3c9c35" opacity="0.65"/>
<path d="M471,162 L503,118 M482.2,146.6 L491.7,144.4 M487.0,140.0 L486.2,130.3 M491.8,133.4 L501.3,131.2" stroke="#4fae34" stroke-width="0.9" opacity="0.7" fill="none"/>
<path d="M455.0,136.0 C455.8,133.5 460.3,137.7 463.0,140.0 C465.7,142.3 470.3,145.2 471.0,150.0 C471.7,154.8 469.2,168.2 467.0,169.0 C464.8,169.8 460.0,160.5 458.0,155.0 C456.0,149.5 454.2,138.5 455.0,136.0Z" fill="#287826" stroke="#0d330e" stroke-width="0.95"/>
<path d="M458.0,141.3 C458.5,139.8 461.3,142.4 462.9,143.8 C464.6,145.2 467.5,147.0 467.9,150.0 C468.3,153.0 466.7,161.3 465.4,161.8 C464.1,162.3 461.1,156.5 459.8,153.1 C458.6,149.7 457.4,142.9 458.0,141.3Z" fill="#3c9c35" opacity="0.65"/>
<path d="M457,139 L466,166 M460.1,148.4 L458.2,153.1 M461.5,152.5 L465.9,155.1 M462.9,156.6 L460.9,161.2" stroke="#4fae34" stroke-width="0.9" opacity="0.7" fill="none"/>
<path d="M382.0,181.0 C382.7,178.5 399.0,174.7 406.0,173.0 C413.0,171.3 419.2,170.2 424.0,171.0 C428.8,171.8 433.3,174.3 435.0,178.0 C436.7,181.7 439.5,191.3 434.0,193.0 C428.5,194.7 410.7,190.0 402.0,188.0 C393.3,186.0 381.3,183.5 382.0,181.0Z" fill="#287826" stroke="#0d330e" stroke-width="0.95"/>
<path d="M394.1,180.9 C394.5,179.3 404.6,176.9 409.0,175.9 C413.3,174.9 417.1,174.2 420.1,174.7 C423.1,175.2 425.9,176.7 427.0,179.0 C428.0,181.3 429.7,187.3 426.3,188.3 C422.9,189.3 411.9,186.5 406.5,185.2 C401.1,184.0 393.7,182.4 394.1,180.9Z" fill="#3c9c35" opacity="0.65"/>
<path d="M385,181 L433,191 M401.8,184.5 L407.1,191.5 M409.0,186.0 L416.6,181.7 M416.2,187.5 L421.5,194.5" stroke="#4fae34" stroke-width="0.9" opacity="0.7" fill="none"/>
<path d="M433.0,185.0 C433.0,182.8 440.3,177.7 444.0,178.0 C447.7,178.3 455.0,184.8 455.0,187.0 C455.0,189.2 447.7,191.3 444.0,191.0 C440.3,190.7 433.0,187.2 433.0,185.0Z" fill="#287826" stroke="#0d330e" stroke-width="0.95"/>
<path d="M463.0,177.0 C464.2,173.5 473.3,167.7 478.0,165.0 C482.7,162.3 486.5,159.3 491.0,161.0 C495.5,162.7 504.3,170.3 505.0,175.0 C505.7,179.7 500.7,187.2 495.0,189.0 C489.3,190.8 476.3,188.0 471.0,186.0 C465.7,184.0 461.8,180.5 463.0,177.0Z" fill="#216a1f" stroke="#0d330e" stroke-width="0.95"/>
<path d="M470.9,176.4 C471.6,174.3 477.3,170.6 480.2,169.0 C483.1,167.3 485.5,165.5 488.3,166.5 C491.1,167.5 496.5,172.3 497.0,175.2 C497.4,178.1 494.3,182.7 490.8,183.9 C487.2,185.0 479.2,183.2 475.9,182.0 C472.6,180.8 470.2,178.6 470.9,176.4Z" fill="#3c9c35" opacity="0.65"/>
<path d="M465,177 L503,176 M478.3,176.7 L483.5,181.0 M484.0,176.5 L489.0,171.9 M489.7,176.3 L494.9,180.7" stroke="#4fae34" stroke-width="0.9" opacity="0.7" fill="none"/>
<path d="M399.0,199.0 C398.0,195.7 408.2,194.0 414.0,193.0 C419.8,192.0 429.2,191.8 434.0,193.0 C438.8,194.2 440.8,196.2 443.0,200.0 C445.2,203.8 450.8,213.8 447.0,216.0 C443.2,218.2 428.0,215.8 420.0,213.0 C412.0,210.2 400.0,202.3 399.0,199.0Z" fill="#216a1f" stroke="#0d330e" stroke-width="0.95"/>
<path d="M409.3,200.3 C408.7,198.2 415.0,197.2 418.6,196.5 C422.2,195.9 428.0,195.8 431.0,196.5 C434.0,197.3 435.3,198.5 436.6,200.9 C437.9,203.3 441.5,209.5 439.1,210.8 C436.7,212.2 427.3,210.7 422.3,208.9 C417.4,207.2 409.9,202.3 409.3,200.3Z" fill="#3c9c35" opacity="0.65"/>
<path d="M402,199 L445,214 M417.1,204.2 L421.1,211.3 M423.5,206.5 L431.1,203.5 M429.9,208.8 L434.0,215.8" stroke="#4fae34" stroke-width="0.9" opacity="0.7" fill="none"/>
<path d="M473.0,196.0 C472.7,191.3 474.2,190.7 481.0,192.0 C487.8,193.3 510.8,200.3 514.0,204.0 C517.2,207.7 505.2,211.3 500.0,214.0 C494.8,216.7 487.5,223.0 483.0,220.0 C478.5,217.0 473.3,200.7 473.0,196.0Z" fill="#287826" stroke="#0d330e" stroke-width="0.95"/>
<path d="M479.5,199.5 C479.3,196.6 480.3,196.2 484.5,197.0 C488.7,197.8 503.0,202.2 505.0,204.5 C506.9,206.7 499.5,209.0 496.3,210.7 C493.1,212.3 488.5,216.2 485.7,214.4 C482.9,212.5 479.7,202.4 479.5,199.5Z" fill="#3c9c35" opacity="0.65"/>
<path d="M478,215 L509,204 M488.9,211.2 L494.3,213.3 M493.5,209.5 L496.4,204.4 M498.1,207.8 L503.6,210.0" stroke="#4fae34" stroke-width="0.9" opacity="0.7" fill="none"/>
<path d="M436,211 Q455.0,227.5 478,210 Q457.0,239.5 436,211Z" fill="#216a1f" stroke="#0d330e" stroke-width="0.95"/>
</svg><!--/PLANT-->
<!-- palette panel -->
<div class="a" style="left:12px;top:62px;width:27px;height:374px;background:linear-gradient(90deg,#e4e9f0,#d7dde6);border-right:1px solid #9aa1a9;border-bottom:1px solid #9aa1a9;border-radius:0 0 3px 0"></div>
<div class="a grip" style="left:17px;top:65px"></div><div class="a grip" style="left:21px;top:65px"></div><div class="a grip" style="left:25px;top:65px"></div><div class="a grip" style="left:29px;top:65px"></div><div class="a grip" style="left:33px;top:65px"></div>
<div class="a" style="left:14px;top:71px;width:22px;height:22px;border-radius:3px;border:1px solid #2b3f57;background:linear-gradient(#58aaf5,#2f8ae8)"></div>
<div class="a" style="left:13px;top:351px;width:23px;height:84px;border:1px solid #8d949c;border-radius:2px;background:#eef1f5"></div>
<div class="a" style="left:15px;top:352px;width:10px;height:10px;background:#ffffff"></div><div class="a" style="left:25px;top:352px;width:10px;height:10px;background:#c0c0c0"></div><div class="a" style="left:15px;top:362px;width:10px;height:10px;background:#808080"></div><div class="a" style="left:25px;top:362px;width:10px;height:10px;background:#000000"></div><div class="a" style="left:15px;top:372px;width:10px;height:10px;background:#0000ff"></div><div class="a" style="left:25px;top:372px;width:10px;height:10px;background:#000080"></div><div class="a" style="left:15px;top:382px;width:10px;height:10px;background:#00ffff"></div><div class="a" style="left:25px;top:382px;width:10px;height:10px;background:#008080"></div><div class="a" style="left:15px;top:392px;width:10px;height:10px;background:#00ff00"></div><div class="a" style="left:25px;top:392px;width:10px;height:10px;background:#008000"></div><div class="a" style="left:15px;top:402px;width:10px;height:10px;background:#ffff00"></div><div class="a" style="left:25px;top:402px;width:10px;height:10px;background:#808000"></div><div class="a" style="left:15px;top:412px;width:10px;height:10px;background:#ff0000"></div><div class="a" style="left:25px;top:412px;width:10px;height:10px;background:#800000"></div><div class="a" style="left:15px;top:422px;width:10px;height:10px;background:#ff00ff"></div><div class="a" style="left:25px;top:422px;width:10px;height:10px;background:#800080"></div>
<!-- status bar -->
<div class="a" style="left:12px;top:482px;width:860px;height:27px;background:#cfd6e0;border-bottom:1px solid #c4cbd5"></div>
<div class="a tb" style="left:12px;top:482px;width:844px;height:27px;border-right:1px solid #8a9098;border-top:1px solid #f1f4f8;border-bottom:1px solid #6f757c;border-radius:0 3px 3px 0;background:linear-gradient(#e8ecf2,#d5dbe4)"></div>
<div class="a grip" style="left:15px;top:486px"></div><div class="a grip" style="left:15px;top:490px"></div><div class="a grip" style="left:15px;top:494px"></div><div class="a grip" style="left:15px;top:498px"></div><div class="a grip" style="left:15px;top:502px"></div>
<div class="a" style="left:21px;top:484px;width:292px;height:23px;border:1px solid #9fa6ae;border-radius:3px;background:#f3f5f8"></div>
<div class="a txt" style="left:24px;top:489px;transform:scaleX(0.91);transform-origin:0 0">Ready</div>
<div class="a txt" style="left:460px;top:489px">100%</div>
<div class="a txt" style="left:597px;top:489px">X , Y</div>
<div class="a txt" style="left:669px;top:489px;transform:scaleX(0.91);transform-origin:0 0">R , G , B</div>
<div class="a txt" style="left:763px;top:489px;transform:scaleX(0.915);transform-origin:0 0">334 x 389 x 24</div>
<div class="a sep" style="left:498px;top:486px;height:19px"></div><div class="a sep" style="left:578px;top:486px;height:19px"></div><div class="a sep" style="left:639px;top:486px;height:19px"></div><div class="a sep" style="left:740px;top:486px;height:19px"></div>

<!-- toolbar icons -->
<svg class="a" style="left:236px;top:38px" width="18" height="20" viewBox="0 0 18 20">
 <defs><linearGradient id="pg" x1="0" y1="0" x2="1" y2="1"><stop offset="0" stop-color="#fff"/><stop offset="1" stop-color="#e6e6e6"/></linearGradient></defs>
 <rect x="3.5" y="2.5" width="12" height="15" fill="url(#pg)" stroke="#8c8c8c"/>
 <g stroke="#e2a400" stroke-width="1.4" stroke-linecap="round"><path d="M5.5 2.2 V8.8 M2.2 5.5 H8.8 M3 3 L8 8 M8 3 L3 8"/></g><g stroke="#f8e040" stroke-width="0.7"><path d="M5.5 3 V8 M3 5.5 H8"/></g>
 <circle cx="5.5" cy="5.5" r="1.6" fill="#fff"/>
</svg>
<div class="a" style="left:318px;top:45px;width:5px;height:2px;background:#000"></div><div class="a" style="left:319px;top:47px;width:3px;height:2px;background:#000"></div><div class="a" style="left:320px;top:49px;width:1px;height:2px;background:#000"></div>
<div class="a" style="left:496px;top:45px;width:5px;height:2px;background:#000"></div><div class="a" style="left:497px;top:47px;width:3px;height:2px;background:#000"></div><div class="a" style="left:498px;top:49px;width:1px;height:2px;background:#000"></div>
<!-- save -->
<svg class="a" style="left:342px;top:39px" width="18" height="18" viewBox="0 0 18 18">
 <rect x="1.5" y="1.5" width="15" height="15" rx="1.5" fill="#4f86d4" stroke="#1f4fae"/>
 <rect x="4" y="2" width="10" height="5" fill="#f4f7fc"/>
 <rect x="5" y="3" width="1" height="3" fill="#2a4f9a"/>
 <rect x="3" y="7" width="12" height="3" fill="#3f74c8"/>
 <rect x="4" y="11" width="10" height="5" fill="#ffffff"/>
 <rect x="5" y="12" width="8" height="1.3" fill="#5bb03a"/>
 <rect x="5" y="14" width="8" height="1.3" fill="#5bb03a"/>
</svg>
<!-- save all -->
<svg class="a" style="left:366px;top:39px" width="18" height="18" viewBox="0 0 18 18">
 <rect x="7.5" y="2.5" width="9" height="9" fill="#e8eef8" stroke="#2d5fb8"/>
 <rect x="5.5" y="4.5" width="9" height="9" fill="#e8eef8" stroke="#2d5fb8"/>
 <rect x="2.5" y="6.5" width="10" height="10" fill="#4f86d4" stroke="#1f4fae"/>
 <rect x="4" y="7" width="7" height="3" fill="#fff"/>
 <rect x="4" y="13" width="7" height="3" fill="#fff"/>
 <rect x="5" y="14" width="5" height="1.3" fill="#7ac43a"/>
</svg>
<!-- copy -->
<svg class="a" style="left:390px;top:39px" width="18" height="18" viewBox="0 0 18 18">
 <path d="M1.5 1.5 H9 L11.5 4 V13.5 H1.5Z" fill="#fbfbfb" stroke="#8a8a8a"/>
 <path d="M5.5 4.5 H13 L16.5 8 V16.5 H5.5Z" fill="#fdfdfd" stroke="#777"/>
 <path d="M13 4.5 V8 H16.5" fill="#e0e0e0" stroke="#777"/>
 <g stroke="#7b84b0" stroke-width="1"><path d="M7.5 7.5 H11 M7.5 9.5 H11 M7.5 11.5 H14 M7.5 13.5 H14"/></g>
 <g stroke="#a5acc8" stroke-width="1"><path d="M3 6.5 H5 M3 8.5 H5 M3 10.5 H5"/></g>
</svg>
<!-- paste -->
<svg class="a" style="left:414px;top:39px" width="18" height="18" viewBox="0 0 18 18">
 <defs><linearGradient id="cb" x1="0" y1="0" x2="1" y2="0"><stop offset="0" stop-color="#c98a30"/><stop offset="0.4" stop-color="#f0c080"/><stop offset="1" stop-color="#d39a4a"/></linearGradient></defs>
 <rect x="1.5" y="2.5" width="13" height="13.5" rx="2" fill="url(#cb)" stroke="#9a6a20"/>
 <rect x="5.5" y="1" width="5" height="3" rx="1" fill="#f4f4f4" stroke="#8a8a8a"/>
 <path d="M6.5 5.5 H13 L16.5 9 V16.5 H6.5Z" fill="#fdfdfd" stroke="#777"/>
 <g stroke="#7b84b0" stroke-width="1"><path d="M8.5 8.5 H11 M8.5 10.5 H11 M8.5 12.5 H14.5 M8.5 14.5 H14.5"/></g>
</svg>
<!-- print -->
<svg class="a" style="left:446px;top:39px" width="18" height="18" viewBox="0 0 18 18">
 <defs><linearGradient id="prg" x1="0" y1="0" x2="0" y2="1"><stop offset="0" stop-color="#e8e8e8"/><stop offset="0.4" stop-color="#ffffff"/><stop offset="1" stop-color="#d8d8d8"/></linearGradient></defs>
 <rect x="4.5" y="1.5" width="9" height="4" fill="#fff" stroke="#9a9a9a"/>
 <rect x="1.5" y="4.5" width="15" height="9" rx="2" fill="url(#prg)" stroke="#6e6e6e"/>
 <rect x="4.5" y="4.5" width="9" height="4" fill="#86d0f4" stroke="#3a90d0"/>
 <rect x="4" y="11" width="10" height="1.2" fill="#3a3a3a"/>
 <rect x="5.5" y="12" width="8" height="4.5" fill="#fafafa" stroke="#8a8a8a"/>
 <rect x="7.5" y="14.2" width="4" height="0.9" fill="#8a8a8a"/>
 <circle cx="14.5" cy="10.4" r="0.9" fill="#e01818"/>
</svg>
<!-- mail -->
<svg class="a" style="left:470px;top:41px" width="18" height="14" viewBox="0 0 18 14">
 <rect x="1.5" y="1.5" width="15" height="11" rx="1" fill="#f6f6f6" stroke="#8c8c8c" stroke-width="1.2"/>
 <path d="M2 2 L9 8 L16 2 M2 12 L7 7 M16 12 L11 7" fill="none" stroke="#b5b5b5"/>
</svg>
<!-- undo -->
<svg class="a" style="left:520px;top:40px" width="18" height="17" viewBox="0 0 18 17">
 <path d="M 1.5,1.8 L 1.5,10.3 L 9.6,10.3 L 7.4,7.9 C 8.5,6.5 10.2,6.0 11.8,6.8 C 13.2,7.6 13.0,10.5 10.5,14.2 L 10.2,15.5 L 11.2,15.8 C 14.5,12.5 17.2,9.0 16.8,5.5 C 16.4,2.0 12.5,0.5 9.5,1.2 C 7.5,1.6 6.0,2.7 4.7,4.4 Z" fill="#c6c6c6" stroke="#a4a4a4" stroke-linejoin="round"/>
</svg>
<!-- redo -->
<svg class="a" style="left:544px;top:40px" width="18" height="17" viewBox="0 0 18 17">
 <defs><linearGradient id="rg" x1="0" y1="0" x2="0" y2="1"><stop offset="0" stop-color="#b4d4fa"/><stop offset="1" stop-color="#5a9aec"/></linearGradient></defs>
 <path d="M16.5,1.8 L16.5,10.3 L8.4,10.3 L10.6,7.9 C9.5,6.5 7.8,6 6.2,6.8 C4.8,7.6 5.0,10.5 7.5,14.2 L7.8,15.5 L6.8,15.8 C3.5,12.5 0.8,9 1.2,5.5 C1.6,2 5.5,0.5 8.5,1.2 C10.5,1.6 12,2.7 13.3,4.4 Z" fill="url(#rg)" stroke="#1f5fc8" stroke-linejoin="round"/>
</svg>
<!-- image icons -->
<svg class="a" style="left:688px;top:39px" width="18" height="18" viewBox="0 0 18 18">
 <defs><linearGradient id="sky" x1="0" y1="0" x2="0" y2="1"><stop offset="0" stop-color="#6cc8f0"/><stop offset="1" stop-color="#d8f2fc"/></linearGradient>
 <pattern id="dith" width="2" height="2" patternUnits="userSpaceOnUse"><rect width="1" height="1" fill="#3aa010"/><rect x="1" y="1" width="1" height="1" fill="#3aa010"/></pattern></defs>
 <rect x="1.5" y="1.5" width="15" height="15" fill="#fff" stroke="#858585" stroke-width="1.4"/>
 <rect x="3" y="3" width="12" height="8" fill="url(#sky)"/>
 <circle cx="6.5" cy="8" r="2" fill="#5cb020"/>
 <rect x="3" y="10" width="12" height="5" fill="url(#dith)"/>
</svg>
<svg class="a" style="left:712px;top:39px" width="18" height="18" viewBox="0 0 18 18">
 <defs><linearGradient id="rb" x1="0" y1="0" x2="1" y2="0"><stop offset="0" stop-color="#10d080"/><stop offset="0.35" stop-color="#80e040"/><stop offset="0.6" stop-color="#f0e000"/><stop offset="1" stop-color="#ff5000"/></linearGradient>
 <linearGradient id="rb2" x1="0" y1="0" x2="1" y2="0"><stop offset="0" stop-color="#1040c0"/><stop offset="0.5" stop-color="#a040e0"/><stop offset="1" stop-color="#ff1010"/></linearGradient></defs>
 <rect x="1.5" y="1.5" width="15" height="15" fill="#fff" stroke="#2a7db8" stroke-width="1.6"/>
 <rect x="3" y="3" width="12" height="2" fill="#2e86c8"/>
 <rect x="3" y="6" width="12" height="5" fill="url(#rb)"/>
 <rect x="3" y="11" width="12" height="4" fill="url(#rb2)"/>
</svg>
<svg class="a" style="left:736px;top:39px" width="18" height="18" viewBox="0 0 18 18">
 <rect x="1.5" y="1.5" width="15" height="15" fill="#fff" stroke="#858585" stroke-width="1.4"/>
 <rect x="3" y="3" width="12" height="7" fill="#eadbd0"/>
 <circle cx="6.5" cy="6.5" r="2" fill="#a87860"/>
 <rect x="3" y="10" width="12" height="5" fill="#8a5535"/>
</svg>
<svg class="a" style="left:760px;top:39px" width="18" height="18" viewBox="0 0 18 18">
 <rect x="1.5" y="1.5" width="15" height="15" fill="#b8b8b8" stroke="#5e5e5e" stroke-width="1.6"/>
 <rect x="3" y="3" width="12" height="12" fill="#3a8ab8"/>
 <rect x="5" y="5" width="8" height="7" fill="#d8f6ff"/>
 <circle cx="6.5" cy="8" r="2" fill="#8ae020"/>
 <rect x="3" y="11" width="12" height="4" fill="#30a010"/>
</svg>
<!-- T clipboard grey -->
<svg class="a" style="left:793px;top:39px" width="16" height="18" viewBox="0 0 16 18">
 <rect x="1.5" y="2.5" width="13" height="14" rx="2" fill="#cfcfcf" stroke="#b0b0b0"/>
 <rect x="5" y="1" width="6" height="2.5" rx="1" fill="#f0f0f0" stroke="#c0c0c0"/>
 <text x="8" y="14.5" font-family="Liberation Serif" font-weight="bold" font-size="11" text-anchor="middle" fill="#8e8e8e">T</text>
</svg>
<!-- gear -->
<svg class="a" style="left:815px;top:39px" width="20" height="19" viewBox="0 0 20 19">
 <g transform="translate(4.8,4.6)"><path d="M2.58,-0.35 L3.79,0.24 L3.27,1.94 L1.93,1.74 L1.88,1.80 L2.18,3.11 L0.52,3.76 L-0.16,2.60 L-0.23,2.59 L-1.08,3.64 L-2.62,2.75 L-2.13,1.49 L-2.17,1.43 L-3.52,1.43 L-3.79,-0.33 L-2.49,-0.73 L-2.47,-0.80 L-3.31,-1.86 L-2.10,-3.17 L-0.98,-2.41 L-0.91,-2.43 L-0.61,-3.75 L1.17,-3.62 L1.27,-2.27 L1.33,-2.23 L2.55,-2.82 L3.56,-1.34 L2.57,-0.42Z" fill="#5a82dc" stroke="#2f50b8" stroke-width="0.9"/><circle r="0.9" fill="#c8d8f8"/></g>
 <g transform="translate(11.2,10.8)"><path d="M5.34,-1.68 L7.10,-1.19 L7.10,1.19 L5.34,1.68 L5.31,1.78 L6.44,3.21 L5.05,5.14 L3.34,4.50 L3.25,4.56 L3.33,6.39 L1.06,7.12 L0.06,5.60 L-0.06,5.60 L-1.06,7.12 L-3.33,6.39 L-3.25,4.56 L-3.34,4.50 L-5.05,5.14 L-6.44,3.21 L-5.31,1.78 L-5.34,1.68 L-7.10,1.19 L-7.10,-1.19 L-5.34,-1.68 L-5.31,-1.78 L-6.44,-3.21 L-5.05,-5.14 L-3.34,-4.50 L-3.25,-4.56 L-3.33,-6.39 L-1.06,-7.12 L-0.06,-5.60 L0.06,-5.60 L1.06,-7.12 L3.33,-6.39 L3.25,-4.56 L3.34,-4.50 L5.05,-5.14 L6.44,-3.21 L5.31,-1.78Z" fill="#efefef" stroke="#4a4a4a" stroke-width="1"/><circle r="1.7" fill="#fff" stroke="#333" stroke-width="1.1"/></g>
</svg>
<!-- info -->
<svg class="a" style="left:848px;top:39px" width="18" height="18" viewBox="0 0 18 18">
 <defs><radialGradient id="ig" cx="0.4" cy="0.3" r="0.8"><stop offset="0" stop-color="#d4e2f8"/><stop offset="1" stop-color="#7a9ee0"/></radialGradient></defs>
 <circle cx="9" cy="8.8" r="7.8" fill="url(#ig)" stroke="#3a5aae" stroke-width="1.2"/>
 <circle cx="9" cy="4.8" r="1.5" fill="#fff"/>
 <path d="M7 7.5 H10 V12.5 H11 V14 H7 V12.5 H8 V9 H7Z" fill="#fff"/>
</svg>

<!-- palette tool icons -->
<svg class="a" style="left:14px;top:71px" width="22" height="22" viewBox="0 0 22 22">
 <path d="M6.5 3.5 L6.5 17.5 L9.8 14.5 L12.3 19.5 L14.5 18.5 L12.1 13.6 L16.2 13.4Z" fill="#fff" stroke="#1a1a1a" stroke-width="1" stroke-linejoin="round"/>
</svg>
<svg class="a" style="left:14px;top:96px" width="22" height="20" viewBox="0 0 22 20">
 <g transform="translate(-0.6,0.9)">
 <path d="M8.6 15.6 L5.4 12.4 L13.2 4.6 L16.4 7.8Z" fill="#f5d84a" stroke="#705010" stroke-width="0.8"/>
 <path d="M13.2 4.6 L14.6 3.2 L17.8 6.4 L16.4 7.8Z" fill="#c8c8c8" stroke="#707070" stroke-width="0.6"/>
 <path d="M14.6 3.2 L15.6 2.2 C16.5 1.3 17.8 1.3 18.7 2.2 C19.6 3.1 19.6 4.4 18.7 5.5 L17.8 6.4Z" fill="#e04a4a" stroke="#a02a2a" stroke-width="0.7"/>
 <path d="M3.6 17.4 L5.4 12.4 L8.6 15.6Z" fill="#e6cc9c" stroke="#8a6a40" stroke-width="0.7"/>
 </g>
</svg>
<svg class="a" style="left:14px;top:119px" width="22" height="22" viewBox="0 0 22 22">
 <path d="M3.5 18.5 L18.5 3.5" stroke="#2a2a2a" stroke-width="2.4" stroke-linecap="butt"/>
</svg>
<svg class="a" style="left:14px;top:143px" width="22" height="22" viewBox="0 0 22 22">
 <path d="M3.5 18 L14 7.5" stroke="#2e2e2e" stroke-width="2.3"/>
 <path d="M18.5 3.2 L17.2 11.5 L10.2 4.5Z" fill="#2e2e2e"/>
</svg>
<svg class="a" style="left:14px;top:168px" width="22" height="20" viewBox="0 0 22 20">
 <rect x="4" y="4" width="14" height="12" fill="#e4e8ee" stroke="#383838" stroke-width="1.8"/>
</svg>
<svg class="a" style="left:14px;top:192px" width="22" height="20" viewBox="0 0 22 20">
 <defs><linearGradient id="bk" x1="0" y1="0" x2="1" y2="1"><stop offset="0" stop-color="#fff"/><stop offset="1" stop-color="#909090"/></linearGradient></defs>
 <path d="M3.5 10.5 L10.5 3.5 L17.5 10.5 L10.5 17.5Z" fill="url(#bk)" stroke="#1a1a1a" stroke-width="1"/>
 <path d="M10.5 2 L10.5 10" stroke="#111" stroke-width="2.2" stroke-linecap="round"/>
 <circle cx="10.7" cy="10" r="1.4" fill="#111"/>
 <path d="M15.5 8.5 C17 6.5 20 6.8 20 9.5 L20 16 C20 17.5 18 17.5 18 16 L18 10.5 C18 9.5 17 9.5 16.5 10Z" fill="#2a56b8" stroke="#1a3a90" stroke-width="0.6"/>
</svg>
<div class="a" style="left:15px;top:212px;width:20px;height:26px;font-family:'Liberation Serif',serif;font-weight:bold;font-size:24px;line-height:26px;text-align:center;color:#0a0a0a;transform:scale(1.06,1.13);transform-origin:50% 6px">T</div>
<svg class="a" style="left:14px;top:240px" width="22" height="20" viewBox="0 0 22 20">
 <defs><linearGradient id="st" x1="0" y1="0" x2="0" y2="1"><stop offset="0" stop-color="#f8d890"/><stop offset="1" stop-color="#c89030"/></linearGradient></defs>
 <rect x="3.5" y="10.5" width="15" height="7" rx="2.5" fill="url(#st)" stroke="#8a5a10"/>
 <rect x="9.5" y="7" width="3" height="4" fill="#d8a040" stroke="#8a5a10" stroke-width="0.8"/>
 <circle cx="11" cy="5.3" r="3.3" fill="url(#st)" stroke="#8a5a10"/>
</svg>
<div class="a" style="left:16px;top:265px;width:18px;height:1px;background:#6a7078"></div>
<svg class="a" style="left:15px;top:272px" width="20" height="20" viewBox="0 0 20 20">
 <circle cx="9.9" cy="9.7" r="8.6" fill="#f4f6fa" stroke="#111" stroke-width="1.6"/>
 <text x="0" y="0" transform="translate(9.9,15.4) scale(0.85,1)" font-family="Liberation Sans" font-weight="bold" font-size="16.5" text-anchor="middle" fill="#111">8</text>
</svg>
<div class="a" style="left:16px;top:297px;width:18px;height:1px;background:#6a7078"></div>
<svg class="a" style="left:15px;top:304px" width="20" height="20" viewBox="0 0 20 20">
 <circle cx="9.7" cy="9.5" r="9.3" fill="#000"/>
</svg>
<svg class="a" style="left:15px;top:328px" width="20" height="20" viewBox="0 0 20 20">
 <circle cx="9.7" cy="10" r="9.3" fill="#000"/>
 <path d="M5 5.3 L14.4 14.7 M14.4 5.3 L5 14.7" stroke="#e00000" stroke-width="2.6"/>
</svg>
<!-- status bar icons -->
<svg class="a" style="left:322px;top:486px" width="18" height="18" viewBox="0 0 18 18">
 <defs><linearGradient id="mg" x1="0" y1="0" x2="0" y2="1"><stop offset="0" stop-color="#f4fbff"/><stop offset="1" stop-color="#6cc4ec"/></linearGradient></defs>
 <path d="M6.8 10.8 L2.5 15.2" stroke="#3a58b0" stroke-width="3.4" stroke-linecap="round"/>
 <path d="M6.8 10.8 L2.5 15.2" stroke="#8aa8e8" stroke-width="1.4" stroke-dasharray="1 1"/>
 <circle cx="10.5" cy="7.3" r="5.8" fill="#fff" stroke="#6a6a6a" stroke-width="1.2"/>
 <circle cx="10.5" cy="7.3" r="4" fill="url(#mg)" stroke="#8a8a8a" stroke-width="0.8"/>
</svg>
<div class="a" style="left:354px;top:493px;width:92px;height:5px;border-top:1px solid #6e7378;border-left:1px solid #6e7378;border-bottom:1px solid #fbfbfc;border-right:1px solid #fbfbfc;background:#eceef2"></div>
<div class="a" style="left:395px;top:488px;width:15px;height:15px;border:1.5px solid #151515;border-radius:3.5px;background:#e6e9ee"></div>
<svg class="a" style="left:506px;top:486px" width="18" height="18" viewBox="0 0 18 18">
 <rect x="2.5" y="1.5" width="13" height="13.5" fill="none" stroke="#222" stroke-dasharray="2 1.5"/>
 <rect x="5" y="4.5" width="8" height="7.5" fill="#fff"/><rect x="5.5" y="5" width="7" height="6.5" fill="#80d0f0"/>
 <rect x="5.5" y="8.5" width="7" height="3" fill="#40a828"/>
</svg>
<svg class="a" style="left:529px;top:485px" width="20" height="19" viewBox="0 0 20 19">
 <circle cx="7.5" cy="7" r="5.6" fill="none" stroke="#2a2a2a" stroke-width="1.1" stroke-dasharray="2.6 1.4"/>
 <path d="M6.5 6 L16.5 16.5" stroke="#1a1a1a" stroke-width="3.6" stroke-linecap="round"/>
 <path d="M7.3 6.8 L16 15.8" stroke="#f4f4f4" stroke-width="1.6"/>
</svg>
<svg class="a" style="left:555px;top:486px" width="16" height="18" viewBox="0 0 16 18">
 <path d="M2.5 0.8 L8 11 L7 11.8 L1.6 1.6Z" fill="#fff" stroke="#707070" stroke-width="0.8"/>
 <path d="M13.5 0.8 L8 11 L9 11.8 L14.4 1.6Z" fill="#fff" stroke="#707070" stroke-width="0.8"/>
 <ellipse cx="4.6" cy="13.6" rx="3.4" ry="3.6" fill="#c42a18" stroke="#8a1a0a" stroke-width="0.6"/>
 <ellipse cx="11.4" cy="13.6" rx="3.4" ry="3.6" fill="#c42a18" stroke="#8a1a0a" stroke-width="0.6"/>
 <ellipse cx="4.3" cy="14.3" rx="1.2" ry="1.6" fill="#e8ecf0"/>
 <ellipse cx="11.7" cy="14.3" rx="1.2" ry="1.6" fill="#e8ecf0"/>
</svg>
<svg class="a" style="left:855px;top:490px" width="17" height="19" viewBox="0 0 17 19">
 <g fill="#111"><rect x="13" y="7" width="2" height="2"/><rect x="9" y="11" width="2" height="2"/><rect x="13" y="11" width="2" height="2"/><rect x="5" y="15" width="2" height="2"/><rect x="9" y="15" width="2" height="2"/><rect x="13" y="15" width="2" height="2"/></g>
</svg>
</body></html>
